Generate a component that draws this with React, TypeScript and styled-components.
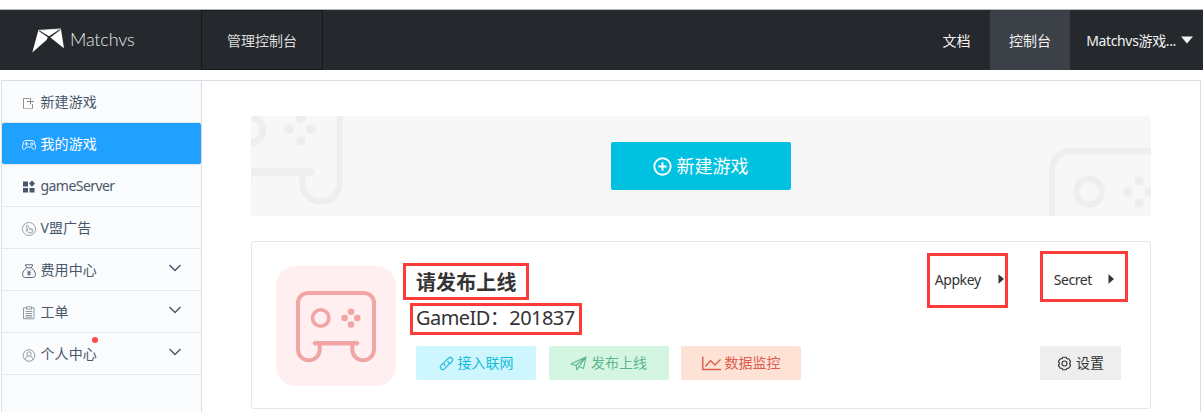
import React from 'react';
import styled, { createGlobalStyle } from 'styled-components';

const Global = createGlobalStyle`
  * { box-sizing: border-box; }
  body {
    margin: 0;
    background: #fff;
    overflow: hidden;
    font-family: "Noto Sans", "Noto Sans CJK SC", sans-serif;
    font-size: 14px;
    color: #333;
  }
  svg { display: block; flex: none; }
`;

const Page = styled.div`
  position: relative;
  width: 1203px;
  height: 412px;
  padding-top: 9px;
  overflow: hidden;
`;

const Header = styled.header`
  display: flex;
  height: 61px;
  border-top: 1px solid #b4b5b7;
  background: #25282d;
  color: #f2f2f2;
`;

const Brand = styled.div`
  display: flex;
  width: 201px;
  padding: 17px 0 0 32px;
  gap: 5px;
`;

const BrandName = styled.span`
  font-family: Lato, sans-serif;
  font-weight: 300;
  font-size: 18px;
  line-height: 25px;
  letter-spacing: -0.15px;
  color: #e6e6e6;
`;

const ConsoleTitle = styled.div`
  width: 122px;
  border: 1px solid #15171a;
  line-height: 60px;
  text-align: center;
  color: #dcdcdc;
`;

const TopNav = styled.nav`
  display: flex;
  margin-left: auto;
`;

const TopItem = styled.div<{ $width: number; $active?: boolean; $end?: boolean }>`
  display: flex;
  align-items: center;
  justify-content: ${p => (p.$end ? 'flex-end' : 'center')};
  gap: 5px;
  width: ${p => p.$width}px;
  padding: 0 ${p => (p.$end ? 10 : 0)}px 1px 0;
  background: ${p => (p.$active ? '#3c4047' : 'transparent')};
  white-space: nowrap;
`;

const AccountName = styled.span`
  letter-spacing: -0.35px;
`;

const Shell = styled.div`
  display: flex;
  width: 1200px;
  height: 340px;
  margin: 10px 0 0 1px;
  border: 1px solid #dadde2;
  border-bottom: 0;
`;

const Sidebar = styled.aside`
  width: 200px;
  border-right: 1px solid #dadde2;
  background: #fbfcfe;
`;

const MenuRow = styled.div<{ $active?: boolean }>`
  display: flex;
  align-items: center;
  height: 42px;
  padding: 0 20px;
  border-bottom: 1px solid #e6e8ec;
  border-radius: ${p => (p.$active ? '2px' : '0')};
  background: ${p => (p.$active ? '#20a0ff' : 'transparent')};
  background-clip: padding-box;
  color: ${p => (p.$active ? '#fff' : '#48576a')};
  svg { margin-top: 3px; }
`;

const MenuText = styled.span<{ $spacing?: number }>`
  position: relative;
  margin-left: 4.5px;
  line-height: 20px;
  letter-spacing: ${p => p.$spacing ?? 0.1}px;
`;

const Dot = styled.i`
  position: absolute;
  top: -7px;
  right: -1px;
  width: 6px;
  height: 6px;
  border-radius: 50%;
  background: #ff4949;
`;

const Arrow = styled.span`
  margin: -7px 0 0 auto;
`;

const Content = styled.main`
  flex: 1;
  padding: 35px 49px 0;
`;

const Banner = styled.section`
  display: grid;
  width: 900px;
  height: 100px;
  border-radius: 4px;
  background: #f7f7f7;
  overflow: hidden;
  > * { grid-area: 1 / 1; }
`;

const CreateButton = styled.button`
  display: flex;
  align-items: center;
  justify-content: center;
  place-self: center;
  gap: 5px;
  width: 180px;
  height: 48px;
  padding: 0 1px 0 0;
  border: 0;
  border-radius: 2px;
  background: #00c1e0;
  color: #fff;
  font: 18px/26px "Noto Sans", "Noto Sans CJK SC", sans-serif;
`;

const Card = styled.section`
  display: flex;
  width: 900px;
  height: 168px;
  margin-top: 25px;
  padding: 24px 29px 0 24px;
  border: 1px solid #e6e6e6;
  border-radius: 3px;
`;

const Tile = styled.div`
  width: 120px;
  height: 120px;
  border-radius: 20px;
  background: #ffeff0;
`;

const Info = styled.div`
  margin-left: 20px;
`;

const GameTitle = styled.h2`
  margin: 0;
  height: 33px;
  font-size: 20px;
  font-weight: 700;
  line-height: 33px;
  letter-spacing: 0.1px;
`;

const GameId = styled.div`
  height: 37px;
  font-size: 20px;
  line-height: 37px;
  letter-spacing: -0.55px;
  white-space: nowrap;
`;

const Actions = styled.div`
  display: flex;
  gap: 12.5px;
  margin-top: 10px;
`;

const Action = styled.button<{ $bg: string; $fg: string; $width?: number; $radius?: number }>`
  display: flex;
  align-items: center;
  justify-content: center;
  gap: 4px;
  width: ${p => p.$width ?? 120}px;
  height: 34px;
  padding: 0;
  border: 0;
  border-radius: ${p => p.$radius ?? 2}px;
  background: ${p => p.$bg};
  color: ${p => p.$fg};
  font: 14px/20px "Noto Sans", "Noto Sans CJK SC", sans-serif;
`;

const Side = styled.div`
  display: flex;
  flex-direction: column;
  align-items: flex-end;
  margin-left: auto;
`;

const Keys = styled.div`
  display: flex;
  gap: 49px;
  margin: 3px 6px 57px 0;
`;

const KeyItem = styled.div<{ $gap: number }>`
  display: flex;
  align-items: center;
  gap: ${p => p.$gap}px;
  height: 20px;
  letter-spacing: -0.4px;
`;

const Highlight = styled.div<{ $x: number; $y: number; $w: number; $h: number }>`
  position: absolute;
  left: ${p => p.$x}px;
  top: ${p => p.$y}px;
  width: ${p => p.$w}px;
  height: ${p => p.$h}px;
  border: 3px solid #fc3b3b;
`;

const Logo = () => (
  <svg width="33" height="26" viewBox="0 0 33 26" fill="#fff">
    <path d="M7.500 3.500 27.800 2.200 17 9.200Z" />
    <path d="M6.200 3.800 15.800 10.300 14.500 13 .3 25.500Z" />
    <path d="M29 2.600 32 21.300 18.300 10.400Z" />
    <path d="M6.200 3.400 29 2" stroke="#fff" strokeWidth=".9" />
  </svg>
);

const Chevron = () => (
  <svg width="12" height="8" viewBox="0 0 12 8" fill="none" stroke="#48576a" strokeWidth="1.400">
    <path d="M.5 1 6 6.500 11.500 1" />
  </svg>
);

const MenuIcon = ({ children }: { children: React.ReactNode }) => (
  <svg width="14" height="14" viewBox="0 0 14 14" fill="none" stroke="currentColor" strokeWidth=".9">
    {children}
  </svg>
);

const icons = {
  create: (
    <MenuIcon>
      <path d="M7.500 2.500H1.500V12.500H10.500V8" stroke="#8b8778" />
      <path d="M1.500 12.500H10.500" stroke="#bdbdb5" />
      <path d="M5 5.500H12M8.500 2V8.500" stroke="#7b7d7e" />
    </MenuIcon>
  ),
  game: (
    <MenuIcon>
      <path d="M4 2.500h6c1.600 0 2.300.8 2.700 2.700l.8 4c.3 2.200-1.700 3-2.700 1.500L9.500 9h-5l-1.300 1.700C2.200 12.200.2 11.400.5 9.200l.8-4C1.700 3.300 2.400 2.500 4 2.500Z" />
      <path d="M4.500 4.400v3M3 5.900h3" strokeLinecap="round" />
      <circle cx="9.800" cy="6" r="1.300" />
    </MenuIcon>
  ),
  server: (
    <MenuIcon>
      <path d="M1 1.500h5v5H1zM1 8h5v4.500H1zM7.500 8h5v4.500h-5zM10 .5 13 3.600 10 6.700 7 3.600z" fill="currentColor" stroke="none" />
    </MenuIcon>
  ),
  ads: (
    <MenuIcon>
      <g stroke="#858b92" strokeWidth=".8">
        <circle cx="7" cy="7" r="6.500" />
        <path d="M4.500 3.500c.6-.6 1.200-.3 1.700.5L7.500 6.500l2.300.4c.9.3 1 .8.8 1.700l-.5 2.200H6.600L4 8.300c.1-.9.8-.8 1.800-.2L4.200 4.600c-.2-.5-.1-.8.300-1.100ZM8 7v1.200M9.300 7.200v1" />
      </g>
    </MenuIcon>
  ),
  billing: (
    <MenuIcon>
      <path d="M4.700 3.800 3.300.9c1.300-.6 2.200.2 3.700-.2 1.300.4 2.300-.4 3.700.2L9.300 3.800ZM4.700 3.800C2.500 5.500.6 8 .6 10.500c0 2 .9 3 2.700 3h7.400c1.800 0 2.700-1 2.700-3 0-2.500-1.900-5-4.100-6.700" />
      <path d="m5.200 6.300 1.800 2 1.800-2M7 8.300v3.500M5.300 8.700h3.400M5.300 10.200h3.400" />
    </MenuIcon>
  ),
  ticket: (
    <MenuIcon>
      <path d="M4 1.800H1.500v11h10.500v-11H10" stroke="#7695a8" />
      <path d="M4.500.8h5v2.400h-5zM3.500 5.500h6.700M3.500 7.500h6.700M3.500 9.500h6.700M3.500 11.200h6.700" stroke="#8a8d87" />
    </MenuIcon>
  ),
  user: (
    <MenuIcon>
      <g stroke="#777f88" strokeWidth=".8">
        <circle cx="7" cy="7.500" r="5.800" />
        <circle cx="7" cy="6" r="2.200" />
        <path d="M3.200 11.700c.2-2 1.300-3 2.500-3.600M10.800 11.700c-.2-2-1.300-3-2.500-3.600" />
      </g>
    </MenuIcon>
  ),
};

type IconName = keyof typeof icons;
const menu: { icon: IconName; text: string; active?: boolean; more?: boolean; dot?: boolean; spacing?: number }[] = [
  { icon: 'create', text: '新建游戏' },
  { icon: 'game', text: '我的游戏', active: true },
  { icon: 'server', text: 'gameServer', spacing: -0.55 },
  { icon: 'ads', text: 'V盟广告' },
  { icon: 'billing', text: '费用中心', more: true },
  { icon: 'ticket', text: '工单', more: true },
  { icon: 'user', text: '个人中心', more: true, dot: true },
];

const BannerArt = () => (
  <svg width="900" height="100" viewBox="0 0 900 100" fill="none" stroke="#eee" strokeWidth="6.400">
    <circle cx="-1" cy="14" r="12.800" />
    <path d="M88.700 0V67A18.700 18.700 0 0 1 51.300 67V56M-2.500 60V71" />
    <path d="M-4 55.800H59.500" strokeWidth="7.500" strokeLinecap="round" />
    <path d="M801 100V54A19 19 0 0 1 820 35H900" />
    <circle cx="838" cy="75.700" r="12.800" />
    <g fill="#eee" stroke="none">
      <circle cx="50" cy="2" r="5" /><circle cx="38" cy="13" r="5" /><circle cx="60" cy="13" r="5" /><circle cx="50" cy="25" r="5" />
      <circle cx="888" cy="65" r="5" /><circle cx="877" cy="76" r="5" /><circle cx="898" cy="76" r="5" /><circle cx="888" cy="87" r="5" />
    </g>
  </svg>
);

const GamepadArt = () => (
  <svg width="120" height="120" viewBox="0 0 120 120" fill="none" stroke="#f2a5a5" strokeWidth="4">
    <path d="M43.700 77V83.500A10.850 10.850 0 0 1 22 83.500V37A10 10 0 0 1 32 27H88A10 10 0 0 1 98 37V83.500A10.850 10.850 0 0 1 76.300 83.500V77" />
    <path d="M39 77.300H81" strokeWidth="4.500" strokeLinecap="round" />
    <circle cx="44.700" cy="52" r="8.200" strokeWidth="3.600" />
    <g fill="#f2a5a5" stroke="none">
      <circle cx="75" cy="45.700" r="3.300" /><circle cx="75" cy="58.500" r="3.300" /><circle cx="68.600" cy="52" r="3.300" /><circle cx="81.300" cy="52" r="3.300" />
    </g>
  </svg>
);

const Triangle = () => (
  <svg width="7" height="10" viewBox="0 0 7 10"><path d="M.5 .3 6 5 .5 9.700z" fill="#333" /></svg>
);

export default function App() {
  return (
    <Page>
      <Global />
      <Header>
        <Brand><Logo /><BrandName>Matchvs</BrandName></Brand>
        <ConsoleTitle>管理控制台</ConsoleTitle>
        <TopNav>
          <TopItem $width={67}>文档</TopItem>
          <TopItem $width={80} $active>控制台</TopItem>
          <TopItem $width={133} $end>
            <AccountName>Matchvs游戏...</AccountName>
            <svg width="12" height="8" viewBox="0 0 12 8"><path d="M0 .5H12L6 7.500z" fill="#f2f2f2" /></svg>
          </TopItem>
        </TopNav>
      </Header>
      <Shell>
        <Sidebar>
          {menu.map(m => (
            <MenuRow key={m.text} $active={m.active}>
              {icons[m.icon]}
              <MenuText $spacing={m.spacing}>{m.text}{m.dot && <Dot />}</MenuText>
              {m.more && <Arrow><Chevron /></Arrow>}
            </MenuRow>
          ))}
        </Sidebar>
        <Content>
          <Banner>
            <BannerArt />
            <CreateButton>
              <svg width="19" height="19" viewBox="0 0 19 19" fill="none" stroke="#fff" strokeWidth="1.900">
                <circle cx="9.500" cy="9.500" r="8.200" /><path d="M9.500 5.300v8.400M5.300 9.500h8.400" />
              </svg>
              新建游戏
            </CreateButton>
          </Banner>
          <Card>
            <Tile><GamepadArt /></Tile>
            <Info>
              <GameTitle>请发布上线</GameTitle>
              <GameId>GameID：201837</GameId>
              <Actions>
                <Action $bg="#cdf6fe" $fg="#16bbdc">
                  <svg width="15" height="15" viewBox="0 0 15 15" fill="none" stroke="currentColor" strokeWidth="1.100">
                    <path d="M6.500 9.800C4.600 8.800 4.700 7 6 5.700L9.300 2.300C11.900-.2 15.200 3.100 12.900 5.600L10.600 8" />
                    <path d="M8.500 5.200C10.400 6.200 10.300 8 9 9.300L5.700 12.700C3.100 15.200-.2 11.900 2.100 9.400L4.400 7" />
                  </svg>
                  接入联网
                </Action>
                <Action $bg="#d3f5e1" $fg="#5cb58c">
                  <svg width="17" height="15" viewBox="0 0 17 15" fill="none" stroke="currentColor" strokeWidth="1.100" strokeLinejoin="round">
                    <path d="M1 8 16 1 13.500 12.500 9 10.500 7 13.800 6 9.500ZM6 9.500 16 1 9 10.500" />
                  </svg>
                  发布上线
                </Action>
                <Action $bg="#ffe2d6" $fg="#dd5c4c">
                  <svg width="19" height="15" viewBox="0 0 19 15" fill="none" stroke="currentColor" strokeWidth="1.400">
                    <path d="M.8 .5V13.500H19M3.500 10.500 8.500 4.500 13 9 18.500 3.500" />
                  </svg>
                  数据监控
                </Action>
              </Actions>
            </Info>
            <Side>
              <Keys>
                <KeyItem $gap={17}>Appkey<Triangle /></KeyItem>
                <KeyItem $gap={16}>Secret<Triangle /></KeyItem>
              </Keys>
              <Action $bg="#eee" $fg="#333" $width={81} $radius={0}>
                <svg width="15" height="15" viewBox="0 0 15 15" fill="none" stroke="currentColor" strokeWidth="1.100" strokeLinejoin="round">
                  <path d="M5.200 2.800 6 1.300h3l.8 1.500 1.700.1 1.500 2.600-.9 2 .9 2-1.500 2.600-1.700.1L9 13.700H6l-.8-1.500-1.700-.1L2 9.500l.9-2-.9-2 1.500-2.600z" transform="translate(-.75 0) scale(1.100 1)" />
                  <circle cx="7.500" cy="7.500" r="2.500" />
                </svg>
                设置
              </Action>
            </Side>
          </Card>
        </Content>
      </Shell>
      <Highlight $x={403} $y={263} $w={126} $h={37} />
      <Highlight $x={410} $y={303} $w={172} $h={32} />
      <Highlight $x={927} $y={253} $w={81} $h={55} />
      <Highlight $x={1040} $y={251} $w={88} $h={51} />
    </Page>
  );
}
